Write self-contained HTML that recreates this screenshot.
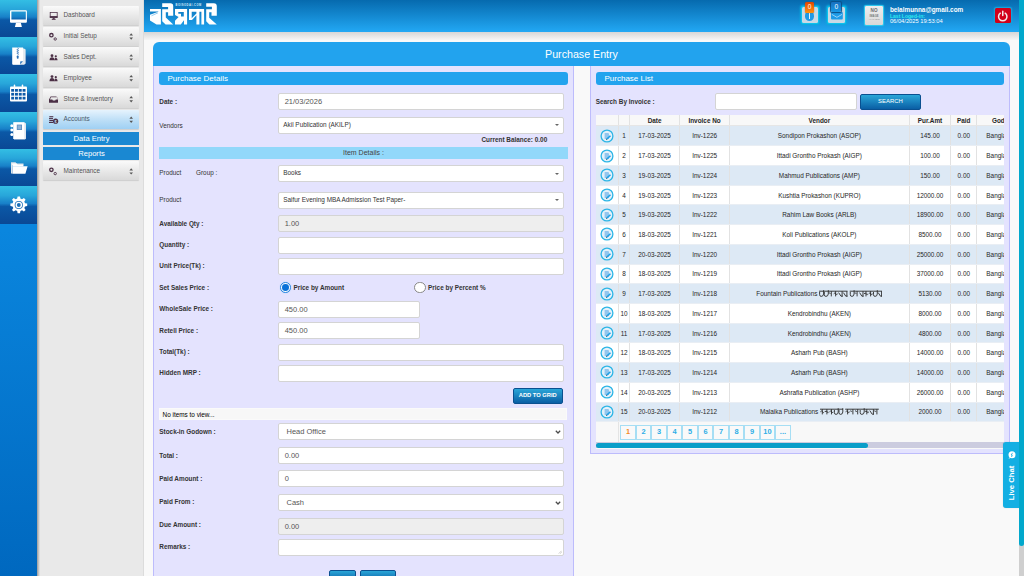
<!DOCTYPE html>
<html><head><meta charset="utf-8">
<style>
*{box-sizing:border-box;margin:0;padding:0}
html,body{width:1024px;height:576px;overflow:hidden}
body{position:relative;background:#f9f9f9;font-family:"Liberation Sans",sans-serif;color:#333}
.a{position:absolute}
.tile{position:absolute;left:0;width:37px;height:37.5px;background:linear-gradient(#33bee4 0%,#28a6da 25%,#1880c8 46%,#0b58a6 54%,#0a4895 100%)}
.mi{position:absolute;left:42.5px;width:96px;height:19px;background:linear-gradient(#fafafa,#e6e6e6 60%,#d9d9d9);border-radius:1px;box-shadow:0 1px 1px rgba(0,0,0,.12);font-size:6.4px;color:#555}
.mi span{position:absolute;left:21px;top:5.5px}
.mi .ud{position:absolute;left:86.5px;top:6px;width:4px;height:8px}
.lbl{position:absolute;left:159.3px;font-size:6.4px;font-weight:bold;color:#333;line-height:8px}
.lbn{font-weight:normal}
.inp{position:absolute;left:278.3px;width:285.5px;height:17px;background:#fff;border:1px solid #d4d4d4;border-radius:2px;font-size:7.47px;color:#555;line-height:15px;padding-left:5.4px}
.sel{font-size:6.4px;color:#333;padding-left:4px;line-height:14.2px}
.dis{background:#eee}
.caret{position:absolute;right:3.6px;top:6.5px;width:0;height:0;border-left:2px solid transparent;border-right:2px solid transparent;border-top:2.5px solid #666}
.chev{position:absolute;right:5px;top:5px;width:4px;height:4px;border-right:1.2px solid #333;border-bottom:1.2px solid #333;transform:rotate(45deg)}
table{border-collapse:collapse;table-layout:fixed}
td,th{font-size:6.4px;text-align:center;color:#262626;border-right:1px solid #e2e2e2;white-space:nowrap;overflow:hidden;padding:0}
th{font-weight:bold;height:11.3px;background:#f8f8f8;border-bottom:1px solid #e6e6e6}
tr.o td{background:#dde9f5}
tr.e td{background:#fff}
td{height:19.73px;border-bottom:1px solid #e9eef4}
.ic{display:inline-block;width:11px;height:11px;border-radius:50%;border:1.3px solid #26b4e4;background:#e8f4fb;position:relative;vertical-align:middle}
.ic:after{content:"";position:absolute;left:2.3px;top:2px;width:4px;height:5px;background:#8cc4ec;border-radius:.5px}
th:last-child{text-align:left;padding-left:14.8px}
td:last-child{text-align:left;padding-left:9.2px}
.pg{position:absolute;top:425.3px;width:15.5px;height:14.3px;border:1px solid #a6def4;background:#f9f9f9;color:#2eaee6;font-size:7.4px;font-weight:bold;text-align:center;line-height:12.5px}
</style></head><body>

<!-- icon bar -->
<div class="a" style="left:0;top:0;width:37px;height:576px;background:linear-gradient(#0a8ae0 0%,#0a86de 40%,#0068bf 100%);box-shadow:1px 0 0 #2a5d90"></div>
<div class="tile" style="top:0.0px;height:37.4px"></div>
<div class="tile" style="top:37.4px;height:37.0px"></div>
<div class="tile" style="top:74.4px;height:37.5px"></div>
<div class="tile" style="top:111.9px;height:36.8px"></div>
<div class="tile" style="top:148.7px;height:37.7px"></div>
<div class="tile" style="top:186.4px;height:38.0px"></div>

<!-- sidebar -->
<div class="a" style="left:37px;top:0;width:107px;height:576px;background:#e9e9e9;border-right:1px solid #dcdcdc"></div>
<div class="a" style="left:37px;top:0;width:2.5px;height:576px;background:linear-gradient(90deg,rgba(60,60,60,.45),rgba(60,60,60,0))"></div>
<div class="mi" style="top:5.6px"><span>Dashboard</span></div>
<div class="mi" style="top:26.5px"><span>Initial Setup</span></div>
<div class="mi" style="top:47.4px"><span>Sales Dept.</span></div>
<div class="mi" style="top:68.3px"><span>Employee</span></div>
<div class="mi" style="top:89.2px"><span>Store &amp; Inventory</span></div>
<div class="mi" style="top:109.7px;background:linear-gradient(#e6f3fd,#b8dcf6 60%,#9fd0f4)"><span style="color:#4a5a6a">Accounts</span></div>
<div class="a" style="left:42.5px;top:131.6px;width:96px;height:13px;background:#1a88d2;color:#fff;font-size:7.6px;text-align:center;line-height:13px;padding-left:2px">Data Entry</div>
<div class="a" style="left:42.5px;top:147.4px;width:96px;height:12.6px;background:#1a88d2;color:#fff;font-size:7.6px;text-align:center;line-height:14px;padding-left:2px">Reports</div>
<div class="mi" style="top:161.3px"><span>Maintenance</span></div>


<!-- tile icons -->
<svg class="a" style="left:0;top:0" width="37" height="225" viewBox="0 0 37 225">
 <g fill="#fff">
  <!-- monitor -->
  <path d="M11,10.3h14.9a1,1 0 0 1 1,1v10.5a1,1 0 0 1 -1,1h-14.9a1,1 0 0 1 -1,-1v-10.5a1,1 0 0 1 1,-1zM11.4,11.5v8.1h14.4v-8.1z" fill-rule="evenodd"/>
  <path d="M16,22.8h4.8l1.1,4.1h-7z"/>
  <!-- zip doc -->
  <path d="M13.5,48.4h10.5l1.6,1.2v13.8l-1.5,1.3h-11.1z" fill="#e3e9ef"/>
  <path d="M12.2,47.6h10.9v13.6l-3,3.2h-7.9z"/>
  <path d="M17.7,47.8l.9,.9-1.8,.9 1.8,.9-1.8,.9 1.8,.9-1.8,.9 1.8,.9-.9,.6" fill="none" stroke="#2a6db4" stroke-width=".7"/>
  <rect x="16.8" y="55.6" width="1.8" height="3.2" rx=".7" fill="#2a6db4"/>
  <path d="M20.1,64.4l3-3.2h-2.2a.8.8 0 0 0 -.8.8z" fill="#3a7dc0"/>
  <!-- calendar -->
  <path d="M11,86.6h15a1,1 0 0 1 1,1v13a1,1 0 0 1 -1,1h-15a1,1 0 0 1 -1,-1v-13a1,1 0 0 1 1,-1z"/>
  <rect x="13.8" y="84.6" width="1.4" height="3" rx=".6"/>
  <rect x="21.8" y="84.6" width="1.4" height="3" rx=".6"/>
  <g fill="#0d5aa8"><rect x="11.2" y="89.0" width="2.9" height="2.7"/><rect x="15.0" y="89.0" width="2.9" height="2.7"/><rect x="18.8" y="89.0" width="2.9" height="2.7"/><rect x="22.6" y="89.0" width="2.9" height="2.7"/><rect x="11.2" y="92.9" width="2.9" height="2.7"/><rect x="15.0" y="92.9" width="2.9" height="2.7"/><rect x="18.8" y="92.9" width="2.9" height="2.7"/><rect x="22.6" y="92.9" width="2.9" height="2.7"/><rect x="11.2" y="96.8" width="2.9" height="2.7"/><rect x="15.0" y="96.8" width="2.9" height="2.7"/><rect x="18.8" y="96.8" width="2.9" height="2.7"/><rect x="22.6" y="96.8" width="2.9" height="2.7"/></g>
  <!-- notebook -->
  <path d="M14,122.6h10.8l1.2,1v15.2l-1.2.8h-10.8z" fill="#dfe6ee"/>
  <path d="M13.2,122.3h11.1v16.6h-11.1z"/>
  <circle cx="11.8" cy="125.8" r="1.5"/><circle cx="11.8" cy="130.1" r="1.5"/><circle cx="11.8" cy="134.4" r="1.5"/>
  <rect x="16.8" y="124.6" width="5.2" height="5.4" fill="#5a8cc0"/>
  <rect x="17.6" y="125.4" width="3.6" height="3.8" fill="#8db3d8"/>
  <!-- folder -->
  <path d="M11,162.2h4.5l1.2,1.4h6.8v1.6h-11.5v8.4h-1z" fill="#dde4ea"/>
  <path d="M12.3,163.4h4.3l1.2,1.3h5.6v1.8h-11z"/>
  <path d="M12.3,166.2h15.3l-2.2,7.6h-13.1z"/>
  <!-- gear -->
  <path d="M17.6,196.4h2.4l.4,2.2 1.6.7 1.9-1.3 1.7,1.7-1.3,1.9.7,1.6 2.2.4v2.4l-2.2.4-.7,1.6 1.3,1.9-1.7,1.7-1.9-1.3-1.6.7-.4,2.2h-2.4l-.4-2.2-1.6-.7-1.9,1.3-1.7-1.7 1.3-1.9-.7-1.6-2.2-.4v-2.4l2.2-.4.7-1.6-1.3-1.9 1.7-1.7 1.9,1.3 1.6-.7z"/>
  <circle cx="18.8" cy="205" r="4.1" fill="#1a6fb8"/>
  <circle cx="18.8" cy="205" r="3.3" fill="#fff"/>
  <circle cx="18.8" cy="205" r="1.9" fill="#1a6fb8"/>
 </g>
</svg>

<!-- menu icons -->
<svg class="a" style="left:44px;top:0" width="96" height="182" viewBox="44 0 96 182">
 <g fill="#4b2f45">
  <path d="M49.8,11.9h7.8v5.6h-7.8z M50.6,12.7v3.6h6.2v-3.6z" fill-rule="evenodd"/>
  <rect x="49.8" y="16.3" width="7.8" height="1.6"/>
  <rect x="52.7" y="17.9" width="2" height="1"/>
  <rect x="51.8" y="18.8" width="3.8" height="1"/>
  <!-- gears initial -->
  <circle cx="51.4" cy="35.2" r="1.7" fill="none" stroke="#4b2f45" stroke-width="1.3"/>
  <circle cx="55.2" cy="39" r="1.2" fill="none" stroke="#4b2f45" stroke-width=".9"/>
  <!-- users sales -->
  <circle cx="52" cy="55.7" r="1.4"/><path d="M49.5,60.3c0-2.2 1-3.1 2.5-3.1s2.5.9 2.5,3.1z"/>
  <circle cx="55.8" cy="56.3" r="1.1"/><path d="M54.3,60.3c.1-1.8.6-2.6 1.5-2.6s1.7.8 1.8,2.6z"/>
  <!-- users employee -->
  <circle cx="52" cy="76.6" r="1.4"/><path d="M49.5,81.2c0-2.2 1-3.1 2.5-3.1s2.5.9 2.5,3.1z"/>
  <circle cx="55.8" cy="77.2" r="1.1"/><path d="M54.3,81.2c.1-1.8.6-2.6 1.5-2.6s1.7.8 1.8,2.6z"/>
  <!-- inbox -->
  <path d="M50.6,96.6h5.8l1.6,3v3.2h-9v-3.2z M51,97.3l-1.1,2.3h2.4l.6,1h2.3l.6-1h2.4l-1.1-2.3z" fill-rule="evenodd"/>
  <!-- coins -->
  <rect x="49.3" y="116.2" width="4" height="1.1"/><rect x="49" y="118.1" width="4" height="1.1"/><rect x="49.3" y="120" width="4" height="1.1"/><rect x="49" y="121.9" width="4" height="1.1"/>
  <circle cx="55.6" cy="121.2" r="2.6"/>
  <text x="55.6" y="122.8" font-size="4" fill="#b9ddf6" text-anchor="middle" font-family="Liberation Sans" font-weight="bold">$</text>
  <!-- gears maintenance -->
  <circle cx="51.4" cy="169.8" r="1.7" fill="none" stroke="#4b2f45" stroke-width="1.3"/>
  <circle cx="55.2" cy="173.6" r="1.2" fill="none" stroke="#4b2f45" stroke-width=".9"/>
 </g>
 <g fill="#555" transform="translate(0,.9)">
  <path d="M129.4,34.6l1.8-2.2 1.8,2.2z M129.4,36.6l1.8,2.2 1.8-2.2z"/>
  <path d="M129.4,55.5l1.8-2.2 1.8,2.2z M129.4,57.5l1.8,2.2 1.8-2.2z"/>
  <path d="M129.4,76.4l1.8-2.2 1.8,2.2z M129.4,78.4l1.8,2.2 1.8-2.2z"/>
  <path d="M129.4,97.3l1.8-2.2 1.8,2.2z M129.4,99.3l1.8,2.2 1.8-2.2z"/>
  <path d="M129.4,117.9l1.8-2.2 1.8,2.2z M129.4,119.9l1.8,2.2 1.8-2.2z"/>
  <path d="M129.4,169.5l1.8-2.2 1.8,2.2z M129.4,171.5l1.8,2.2 1.8-2.2z"/>
 </g>
</svg>

<!-- header -->
<div class="a" style="left:144px;top:0;width:875px;height:31.7px;background:linear-gradient(#066aae,#22a8f4)"></div>
<div class="a" style="left:144px;top:31.7px;width:875px;height:8px;background:linear-gradient(#d6d6d6,#f5f5f5)"></div>


<!-- logo -->
<svg class="a" style="left:144px;top:0" width="80" height="32" viewBox="144 0 80 32">
 <g fill="#fff">
  <path d="M150,9.1h10.9v15.4h-4.4l-6.5-4.1v-5.6l8.4-3.1v-0.2h-8.4z"/>
  <path d="M162.2,3.3h8.2q2.8,0 2.8,2.8v9.6h-5.1v-3.4h-2.3v5.2l7.4,7h-7.6l-3.4-3.2v-12h5.9v-2.4h-5.9z"/>
  <path d="M175,9.1H187.1V24.5H184V20.2L180.8,24.5H175V20.8L178.6,16.9L175,14.9Z M178.3,12.1H183.8V16.6H181V13.7H178.3Z" fill-rule="evenodd"/>
  <path d="M189,9.1h15.1v15.4h-2.7v-12.7h-2v12.7h-3v-9.2l-4.4,4.6h-3z M191.7,11.8v6.4l4.7-4.6v-1.8z" fill-rule="evenodd"/>
  <path d="M206.2,3.3h7.6q3,0 3,3v9.4h-5.3v-3.4h-2.3v5.4l7.6,6.8h-7.4l-3.2-3.2v-12.1h5.7v-2.4h-5.7z"/>
 </g>
 <text x="175.5" y="6" font-size="2.6" fill="#dff2ff" font-family="Liberation Sans" font-weight="bold" letter-spacing=".55">BOISODAI.COM</text>
 <path d="M151.5,15.8l6.5-3" stroke="#7cc3ee" stroke-width=".8"/>
</svg>

<!-- notification icons -->
<div class="a" style="left:801.6px;top:7px;width:16.4px;height:16.4px;background:#c9d9e5;border-radius:1.5px;box-shadow:0 0 0 1px #0cc2ee,0 0 2px 1.2px #08aee0"></div>
<div class="a" style="left:804.8px;top:11.2px;width:9.6px;height:9.6px;border-radius:50%;background:#1e9be8"></div>
<div class="a" style="left:809px;top:13px;width:1.2px;height:3.6px;background:#e8f4fb"></div><div class="a" style="left:809px;top:17.4px;width:1.2px;height:1.2px;background:#e8f4fb"></div>
<div class="a" style="left:804.8px;top:2.3px;width:9.4px;height:10.3px;border-radius:1.5px;background:linear-gradient(#e04400,#ff9410);box-shadow:0 0 1px #7a3000;color:#fff;font-size:6.6px;text-align:center;line-height:10.3px">0</div>
<div class="a" style="left:828.2px;top:7px;width:16.4px;height:16.4px;background:#c9d9e5;border-radius:1.5px;box-shadow:0 0 0 1px #0cc2ee,0 0 2px 1.2px #08aee0"></div>
<svg class="a" style="left:830.5px;top:12px" width="12" height="8" viewBox="0 0 12 8"><rect x="0" y="0" width="11.8" height="7.6" rx="1" fill="#1e9be8"/><path d="M.8,2.4l5.1,2.9 5.1-2.9" fill="none" stroke="#d0eafa" stroke-width=".7"/></svg>
<div class="a" style="left:831.4px;top:2px;width:9.7px;height:10px;border-radius:1.5px;background:linear-gradient(#1870c0,#1a9ae6);box-shadow:0 0 1px 0.5px #0b4f88;color:#fff;font-size:6.6px;text-align:center;line-height:10px">0</div>

<!-- avatar -->
<div class="a" style="left:865.3px;top:6.4px;width:17.6px;height:18.2px;background:linear-gradient(#eeeeee,#d8d8d8);border-radius:1px;box-shadow:0 0 0 1px #2ec8ee,0 0 2px 1px #17b6e6"></div>
<div class="a" style="left:865.3px;top:9.4px;width:17.6px;text-align:center;font-size:4.6px;color:#6a6a6a;font-weight:bold;line-height:4.6px;letter-spacing:.2px">NO</div>
<div class="a" style="left:865.3px;top:14.6px;width:17.6px;text-align:center;font-size:2.7px;color:#777;font-weight:bold;line-height:3px;letter-spacing:.1px">IMAGE</div>
<div class="a" style="left:865.3px;top:18px;width:17.6px;text-align:center;font-size:2.1px;color:#888;line-height:2.6px">AVAILABLE</div>

<!-- user text -->
<div class="a" style="left:889.9px;top:5.5px;font-size:6.4px;font-weight:bold;color:#fff;line-height:7px">belalmunna@gmail.com</div>
<div class="a" style="left:889.9px;top:12.6px;font-size:5.1px;font-weight:bold;color:#2ee8ee;line-height:6px">Last Loged-in:</div>
<div class="a" style="left:889.9px;top:18.4px;font-size:5.75px;color:#fff;line-height:6px">06/04/2025 19:53:04</div>

<!-- power -->
<div class="a" style="left:995px;top:7.8px;width:15.5px;height:15.6px;background:#d2001a;border-radius:1.5px;box-shadow:0 0 0 1px #1aa0d8,0 0 2px 1px #12a6dc"></div>
<svg class="a" style="left:995px;top:7.8px" width="15.5" height="15.6" viewBox="0 0 15.5 15.6"><path d="M5.3,5.2a4.2,4.2 0 1 0 4.9,0" fill="none" stroke="#f4e8ea" stroke-width="1.5" stroke-linecap="round"/><path d="M7.75,3.3v4.2" stroke="#f4e8ea" stroke-width="1.5" stroke-linecap="round"/></svg>

<!-- main panel -->
<div class="a" style="left:153px;top:41.5px;width:857px;height:24.5px;background:#22a3ee;border-radius:6px 6px 0 0"></div>
<div class="a" style="left:153px;top:46px;width:857px;text-align:center;color:#fff;font-size:10.67px;line-height:16px;">Purchase Entry</div>

<!-- left panel body -->
<div class="a" style="left:153px;top:66px;width:421px;height:520px;background:#e4e3fe;border:1px solid #bdbcfc;border-top:none"></div>
<!-- right panel body -->
<div class="a" style="left:590px;top:66px;width:420px;height:388px;background:#e4e3fe;border:1px solid #bdbcfc;border-top:none"></div>

<div class="a" style="left:159px;top:72.2px;width:409px;height:13px;background:#22a3ee;border-radius:3px;color:#fff;font-size:8px;line-height:13px;padding-left:8.5px">Purchase Details</div>
<div class="a" style="left:596px;top:72.2px;width:408px;height:13px;background:#22a3ee;border-radius:3px;color:#fff;font-size:8px;line-height:13px;padding-left:8.5px">Purchase List</div>

<!-- left form -->
<div class="lbl" style="top:97.7px">Date :</div>
<div class="inp" style="top:93.3px">21/03/2026</div>
<div class="lbl lbn" style="top:121.8px">Vendors</div>
<div class="inp sel" style="top:116.6px;line-height:13.5px">Akil Publication (AKILP)<i class="caret"></i></div>
<div class="a" style="left:481.5px;top:136px;font-size:6.4px;font-weight:bold;color:#333;line-height:8px">Current Balance: 0.00</div>
<div class="a" style="left:159px;top:146.8px;width:409px;height:12.5px;background:#92d8fa;font-size:7px;color:#444;text-align:center;line-height:12.2px">Item Details :</div>

<div class="lbl lbn" style="top:169.4px">Product</div>
<div class="lbl lbn" style="top:169.4px;left:196px">Group :</div>
<div class="inp sel" style="top:165.3px">Books<i class="caret"></i></div>
<div class="lbl lbn" style="top:196px">Product</div>
<div class="inp sel" style="top:191.5px">Saifur Evening MBA Admission Test Paper-<i class="caret"></i></div>
<div class="lbl" style="top:219.7px">Available Qty :</div>
<div class="inp dis" style="top:215.4px">1.00</div>
<div class="lbl" style="top:241.4px">Quantity :</div>
<div class="inp" style="top:236.6px"></div>
<div class="lbl" style="top:262.1px">Unit Price(Tk) :</div>
<div class="inp" style="top:257.9px"></div>
<div class="lbl" style="top:283.5px">Set Sales Price :</div>
<div class="a" style="left:280px;top:282px;width:11.4px;height:11.4px;border-radius:50%;border:1px solid #2a86e0;background:#fff;box-shadow:0 0 1px #8ac4f4"><div class="a" style="left:1.3px;top:1.3px;width:6.8px;height:6.8px;border-radius:50%;background:#0a72d8"></div></div>
<div class="a" style="left:293.5px;top:283.5px;font-size:6.4px;font-weight:bold;color:#333;line-height:8px">Price by Amount</div>
<div class="a" style="left:414.3px;top:282px;width:11.4px;height:11.4px;border-radius:50%;border:1px solid #888;background:#fff"></div>
<div class="a" style="left:428.1px;top:283.5px;font-size:6.4px;font-weight:bold;color:#333;line-height:8px">Price by Percent %</div>
<div class="lbl" style="top:304.9px">WholeSale Price :</div>
<div class="inp" style="top:300.6px;width:142px">450.00</div>
<div class="lbl" style="top:326.6px">Retell Price :</div>
<div class="inp" style="top:322.2px;width:142px">450.00</div>
<div class="lbl" style="top:347.7px">Total(Tk) :</div>
<div class="inp" style="top:343.6px"></div>
<div class="lbl" style="top:369px">Hidden MRP :</div>
<div class="inp" style="top:365px"></div>
<div class="a" style="left:512.5px;top:388px;width:50.5px;height:15.8px;border-radius:2px;background:linear-gradient(#2aa6d8,#0a5ea4);border:1px solid #0a5090;color:#fff;font-size:5.75px;font-weight:bold;text-align:center;line-height:13.8px">ADD TO GRID</div>
<div class="a" style="left:159.2px;top:407.6px;width:408px;height:12.2px;background:#f7f7f7;border:.5px solid #fafafa;font-size:6.4px;color:#000;line-height:11.5px;padding-left:2.4px">No items to view...</div>

<div class="lbl" style="top:427.5px">Stock-in Godown :</div>
<div class="inp" style="top:423.3px;padding-left:7.2px">Head Office<svg class="a" style="right:2.2px;top:6.2px" width="6" height="4" viewBox="0 0 6 4"><path d="M.8,.8l2.2,2.2 2.2-2.2" fill="none" stroke="#4a4a4a" stroke-width="1.25"/></svg></div>
<div class="lbl" style="top:451.6px">Total :</div>
<div class="inp" style="top:446.7px">0.00</div>
<div class="lbl" style="top:474.8px">Paid Amount :</div>
<div class="inp" style="top:470.2px">0</div>
<div class="lbl" style="top:498.3px">Paid From :</div>
<div class="inp" style="top:493.7px;padding-left:7.2px">Cash<svg class="a" style="right:2.2px;top:6.2px" width="6" height="4" viewBox="0 0 6 4"><path d="M.8,.8l2.2,2.2 2.2-2.2" fill="none" stroke="#4a4a4a" stroke-width="1.25"/></svg></div>
<div class="lbl" style="top:521.2px">Due Amount :</div>
<div class="inp dis" style="top:517.5px">0.00</div>
<div class="lbl" style="top:542.6px">Remarks :</div>
<div class="inp" style="top:538.9px"><svg class="a" style="right:1px;bottom:1px" width="4" height="4" viewBox="0 0 4 4"><path d="M3.6,.8l-2.8,2.8M3.6,2.4l-1.2,1.2" stroke="#999" stroke-width=".5"/></svg></div>
<div class="a" style="left:328.6px;top:570.2px;width:27px;height:12px;border-radius:2px;background:linear-gradient(#2aa6d8,#0a5ea4);border:1px solid #0a5090"></div>
<div class="a" style="left:360px;top:570.2px;width:36px;height:12px;border-radius:2px;background:linear-gradient(#2aa6d8,#0a5ea4);border:1px solid #0a5090"></div>

<!-- right list -->
<div class="a" style="left:595.7px;top:97.7px;font-size:6.4px;font-weight:bold;color:#333;line-height:8px">Search By Invoice :</div>
<div class="a" style="left:714.7px;top:93.4px;width:142px;height:17px;background:#fff;border:1px solid #d4d4d4;border-radius:2px"></div>
<div class="a" style="left:859.9px;top:93.9px;width:61px;height:15.8px;border-radius:2px;background:linear-gradient(#2aa6d8,#0a5ea4);border:1px solid #0a5090;color:#fff;font-size:5.9px;text-align:center;line-height:13.8px">SEARCH</div>

<div class="a" style="left:595.7px;top:114.7px;width:408.6px;height:334px;overflow:hidden;background:#f8f8f8">
<table style="width:430px">
<colgroup><col style="width:22.7px"><col style="width:11.2px"><col style="width:50px"><col style="width:50.1px"><col style="width:179.4px"><col style="width:41.9px"><col style="width:25.7px"><col style="width:49px"></colgroup>
<tr><th></th><th></th><th>Date</th><th>Invoice No</th><th>Vendor</th><th>Pur.Amt</th><th>Paid</th><th>Godown</th></tr>
<tr class="o"><td><svg width="14" height="14" viewBox="0 0 14 14" style="vertical-align:middle"><circle cx="7" cy="7" r="5.9" fill="#e4f1fa" stroke="#2cb5e6" stroke-width="1.3"/><path d="M4.6,3.9h3.6l.8.8v5.4h-4.4z" fill="#92c6ee"/><path d="M6.3,9.6l3.6-3.4 1.1,1.1-3.6,3.3-1.4.3z" fill="#1e9fe6"/><path d="M6.1,10.8l.3-1.1.9.9z" fill="#5a4a2a"/></svg></td><td>1</td><td>17-03-2025</td><td>Inv-1226</td><td>Sondipon Prokashon (ASOP)</td><td>145.00</td><td>0.00</td><td>Bangla</td></tr>
<tr class="e"><td><svg width="14" height="14" viewBox="0 0 14 14" style="vertical-align:middle"><circle cx="7" cy="7" r="5.9" fill="#e4f1fa" stroke="#2cb5e6" stroke-width="1.3"/><path d="M4.6,3.9h3.6l.8.8v5.4h-4.4z" fill="#92c6ee"/><path d="M6.3,9.6l3.6-3.4 1.1,1.1-3.6,3.3-1.4.3z" fill="#1e9fe6"/><path d="M6.1,10.8l.3-1.1.9.9z" fill="#5a4a2a"/></svg></td><td>2</td><td>17-03-2025</td><td>Inv-1225</td><td>Ittadi Grontho Prokash (AIGP)</td><td>100.00</td><td>0.00</td><td>Bangla</td></tr>
<tr class="o"><td><svg width="14" height="14" viewBox="0 0 14 14" style="vertical-align:middle"><circle cx="7" cy="7" r="5.9" fill="#e4f1fa" stroke="#2cb5e6" stroke-width="1.3"/><path d="M4.6,3.9h3.6l.8.8v5.4h-4.4z" fill="#92c6ee"/><path d="M6.3,9.6l3.6-3.4 1.1,1.1-3.6,3.3-1.4.3z" fill="#1e9fe6"/><path d="M6.1,10.8l.3-1.1.9.9z" fill="#5a4a2a"/></svg></td><td>3</td><td>19-03-2025</td><td>Inv-1224</td><td>Mahmud Publications (AMP)</td><td>150.00</td><td>0.00</td><td>Bangla</td></tr>
<tr class="e"><td><svg width="14" height="14" viewBox="0 0 14 14" style="vertical-align:middle"><circle cx="7" cy="7" r="5.9" fill="#e4f1fa" stroke="#2cb5e6" stroke-width="1.3"/><path d="M4.6,3.9h3.6l.8.8v5.4h-4.4z" fill="#92c6ee"/><path d="M6.3,9.6l3.6-3.4 1.1,1.1-3.6,3.3-1.4.3z" fill="#1e9fe6"/><path d="M6.1,10.8l.3-1.1.9.9z" fill="#5a4a2a"/></svg></td><td>4</td><td>19-03-2025</td><td>Inv-1223</td><td>Kushtia Prokashon (KUPRO)</td><td>12000.00</td><td>0.00</td><td>Bangla</td></tr>
<tr class="o"><td><svg width="14" height="14" viewBox="0 0 14 14" style="vertical-align:middle"><circle cx="7" cy="7" r="5.9" fill="#e4f1fa" stroke="#2cb5e6" stroke-width="1.3"/><path d="M4.6,3.9h3.6l.8.8v5.4h-4.4z" fill="#92c6ee"/><path d="M6.3,9.6l3.6-3.4 1.1,1.1-3.6,3.3-1.4.3z" fill="#1e9fe6"/><path d="M6.1,10.8l.3-1.1.9.9z" fill="#5a4a2a"/></svg></td><td>5</td><td>19-03-2025</td><td>Inv-1222</td><td>Rahim Law Books (ARLB)</td><td>18900.00</td><td>0.00</td><td>Bangla</td></tr>
<tr class="e"><td><svg width="14" height="14" viewBox="0 0 14 14" style="vertical-align:middle"><circle cx="7" cy="7" r="5.9" fill="#e4f1fa" stroke="#2cb5e6" stroke-width="1.3"/><path d="M4.6,3.9h3.6l.8.8v5.4h-4.4z" fill="#92c6ee"/><path d="M6.3,9.6l3.6-3.4 1.1,1.1-3.6,3.3-1.4.3z" fill="#1e9fe6"/><path d="M6.1,10.8l.3-1.1.9.9z" fill="#5a4a2a"/></svg></td><td>6</td><td>18-03-2025</td><td>Inv-1221</td><td>Koli Publications (AKOLP)</td><td>8500.00</td><td>0.00</td><td>Bangla</td></tr>
<tr class="o"><td><svg width="14" height="14" viewBox="0 0 14 14" style="vertical-align:middle"><circle cx="7" cy="7" r="5.9" fill="#e4f1fa" stroke="#2cb5e6" stroke-width="1.3"/><path d="M4.6,3.9h3.6l.8.8v5.4h-4.4z" fill="#92c6ee"/><path d="M6.3,9.6l3.6-3.4 1.1,1.1-3.6,3.3-1.4.3z" fill="#1e9fe6"/><path d="M6.1,10.8l.3-1.1.9.9z" fill="#5a4a2a"/></svg></td><td>7</td><td>20-03-2025</td><td>Inv-1220</td><td>Ittadi Grontho Prokash (AIGP)</td><td>25000.00</td><td>0.00</td><td>Bangla</td></tr>
<tr class="e"><td><svg width="14" height="14" viewBox="0 0 14 14" style="vertical-align:middle"><circle cx="7" cy="7" r="5.9" fill="#e4f1fa" stroke="#2cb5e6" stroke-width="1.3"/><path d="M4.6,3.9h3.6l.8.8v5.4h-4.4z" fill="#92c6ee"/><path d="M6.3,9.6l3.6-3.4 1.1,1.1-3.6,3.3-1.4.3z" fill="#1e9fe6"/><path d="M6.1,10.8l.3-1.1.9.9z" fill="#5a4a2a"/></svg></td><td>8</td><td>18-03-2025</td><td>Inv-1219</td><td>Ittadi Grontho Prokash (AIGP)</td><td>37000.00</td><td>0.00</td><td>Bangla</td></tr>
<tr class="o"><td><svg width="14" height="14" viewBox="0 0 14 14" style="vertical-align:middle"><circle cx="7" cy="7" r="5.9" fill="#e4f1fa" stroke="#2cb5e6" stroke-width="1.3"/><path d="M4.6,3.9h3.6l.8.8v5.4h-4.4z" fill="#92c6ee"/><path d="M6.3,9.6l3.6-3.4 1.1,1.1-3.6,3.3-1.4.3z" fill="#1e9fe6"/><path d="M6.1,10.8l.3-1.1.9.9z" fill="#5a4a2a"/></svg></td><td>9</td><td>17-03-2025</td><td>Inv-1218</td><td>Fountain Publications <svg width="63.2" height="7" viewBox="0 0 63.2 7" style="vertical-align:-1px"><path d="M0.0,1.2h28.5 M0.6,2v2.6q0,1.8 1.6,1.8q2.1,0 2.4,-2.4v-3.8 M5.3,2v2.6q0,1.8 1.6,1.8q2.1,0 2.4,-2.4v-3.8 M12.3,1.2v5.2 M9.8,3q1,-.6 1.6,.8 M16.6,1.2v5.2 M14.7,3.8q1.2,-1.6 2.1,0q1.2,1.6 1.9,0 M23.1,1.2v5.2 M19.6,2.6l2.4,3.6h1.8 M27.9,1.2v5.2 M24.4,2.6l2.4,3.6h1.8 M30.7,1.2h32.5 M31.3,2v2.6q0,1.8 1.6,1.8q2.0,0 2.2,-2.4v-3.8 M38.1,1.2v5.2 M35.6,3q1,-.6 1.6,.8 M44.0,1.2v5.2 M40.6,2.6l2.3,3.6h1.7 M47.0,1.2v5.2 M45.0,3.8q1.2,-1.6 2.1,0q1.2,1.6 1.9,0 M51.6,1.2v5.2 M49.7,3.8q1.2,-1.6 2.1,0q1.2,1.6 1.9,0 M54.5,2v2.6q0,1.8 1.6,1.8q2.0,0 2.2,-2.4v-3.8 M62.6,1.2v5.2 M59.2,2.6l2.3,3.6h1.7" fill="none" stroke="#2a2a2a" stroke-width=".9"/></svg></td><td>5130.00</td><td>0.00</td><td>Bangla</td></tr>
<tr class="e"><td><svg width="14" height="14" viewBox="0 0 14 14" style="vertical-align:middle"><circle cx="7" cy="7" r="5.9" fill="#e4f1fa" stroke="#2cb5e6" stroke-width="1.3"/><path d="M4.6,3.9h3.6l.8.8v5.4h-4.4z" fill="#92c6ee"/><path d="M6.3,9.6l3.6-3.4 1.1,1.1-3.6,3.3-1.4.3z" fill="#1e9fe6"/><path d="M6.1,10.8l.3-1.1.9.9z" fill="#5a4a2a"/></svg></td><td>10</td><td>18-03-2025</td><td>Inv-1217</td><td>Kendrobindhu (AKEN)</td><td>8000.00</td><td>0.00</td><td>Bangla</td></tr>
<tr class="o"><td><svg width="14" height="14" viewBox="0 0 14 14" style="vertical-align:middle"><circle cx="7" cy="7" r="5.9" fill="#e4f1fa" stroke="#2cb5e6" stroke-width="1.3"/><path d="M4.6,3.9h3.6l.8.8v5.4h-4.4z" fill="#92c6ee"/><path d="M6.3,9.6l3.6-3.4 1.1,1.1-3.6,3.3-1.4.3z" fill="#1e9fe6"/><path d="M6.1,10.8l.3-1.1.9.9z" fill="#5a4a2a"/></svg></td><td>11</td><td>17-03-2025</td><td>Inv-1216</td><td>Kendrobindhu (AKEN)</td><td>4800.00</td><td>0.00</td><td>Bangla</td></tr>
<tr class="e"><td><svg width="14" height="14" viewBox="0 0 14 14" style="vertical-align:middle"><circle cx="7" cy="7" r="5.9" fill="#e4f1fa" stroke="#2cb5e6" stroke-width="1.3"/><path d="M4.6,3.9h3.6l.8.8v5.4h-4.4z" fill="#92c6ee"/><path d="M6.3,9.6l3.6-3.4 1.1,1.1-3.6,3.3-1.4.3z" fill="#1e9fe6"/><path d="M6.1,10.8l.3-1.1.9.9z" fill="#5a4a2a"/></svg></td><td>12</td><td>18-03-2025</td><td>Inv-1215</td><td>Asharh Pub (BASH)</td><td>14000.00</td><td>0.00</td><td>Bangla</td></tr>
<tr class="o"><td><svg width="14" height="14" viewBox="0 0 14 14" style="vertical-align:middle"><circle cx="7" cy="7" r="5.9" fill="#e4f1fa" stroke="#2cb5e6" stroke-width="1.3"/><path d="M4.6,3.9h3.6l.8.8v5.4h-4.4z" fill="#92c6ee"/><path d="M6.3,9.6l3.6-3.4 1.1,1.1-3.6,3.3-1.4.3z" fill="#1e9fe6"/><path d="M6.1,10.8l.3-1.1.9.9z" fill="#5a4a2a"/></svg></td><td>13</td><td>17-03-2025</td><td>Inv-1214</td><td>Asharh Pub (BASH)</td><td>14000.00</td><td>0.00</td><td>Bangla</td></tr>
<tr class="e"><td><svg width="14" height="14" viewBox="0 0 14 14" style="vertical-align:middle"><circle cx="7" cy="7" r="5.9" fill="#e4f1fa" stroke="#2cb5e6" stroke-width="1.3"/><path d="M4.6,3.9h3.6l.8.8v5.4h-4.4z" fill="#92c6ee"/><path d="M6.3,9.6l3.6-3.4 1.1,1.1-3.6,3.3-1.4.3z" fill="#1e9fe6"/><path d="M6.1,10.8l.3-1.1.9.9z" fill="#5a4a2a"/></svg></td><td>14</td><td>20-03-2025</td><td>Inv-1213</td><td>Ashrafia Publication (ASHP)</td><td>26000.00</td><td>0.00</td><td>Bangla</td></tr>
<tr class="o"><td><svg width="14" height="14" viewBox="0 0 14 14" style="vertical-align:middle"><circle cx="7" cy="7" r="5.9" fill="#e4f1fa" stroke="#2cb5e6" stroke-width="1.3"/><path d="M4.6,3.9h3.6l.8.8v5.4h-4.4z" fill="#92c6ee"/><path d="M6.3,9.6l3.6-3.4 1.1,1.1-3.6,3.3-1.4.3z" fill="#1e9fe6"/><path d="M6.1,10.8l.3-1.1.9.9z" fill="#5a4a2a"/></svg></td><td>15</td><td>20-03-2025</td><td>Inv-1212</td><td>Malaika Publications <svg width="58.8" height="7" viewBox="0 0 58.8 7" style="vertical-align:-1px"><path d="M0.0,1.2h23.0 M2.3,1.2v5.2 M0.4,3.8q1.1,-1.6 2.1,0q1.1,1.6 1.8,0 M6.9,1.2v5.2 M5.0,3.8q1.1,-1.6 2.1,0q1.1,1.6 1.8,0 M11.5,1.2v5.2 M9.6,3.8q1.1,-1.6 2.1,0q1.1,1.6 1.8,0 M14.4,2v2.6q0,1.8 1.6,1.8q2.0,0 2.2,-2.4v-3.8 M19.0,2v2.6q0,1.8 1.6,1.8q2.0,0 2.2,-2.4v-3.8 M25.2,1.2h33.6 M27.6,1.2v5.2 M25.6,3.8q1.2,-1.6 2.2,0q1.2,1.6 1.9,0 M32.9,1.2v5.2 M30.3,3q1,-.6 1.6,.8 M37.7,1.2v5.2 M35.1,3q1,-.6 1.6,.8 M40.2,2v2.6q0,1.8 1.6,1.8q2.2,0 2.4,-2.4v-3.8 M46.8,1.2v5.2 M44.8,3.8q1.2,-1.6 2.2,0q1.2,1.6 1.9,0 M53.4,1.2v5.2 M49.8,2.6l2.4,3.6h1.8 M56.9,1.2v5.2 M54.3,3q1,-.6 1.6,.8" fill="none" stroke="#2a2a2a" stroke-width=".9"/></svg></td><td>2000.00</td><td>0.00</td><td>Bangla</td></tr>
</table>
</div>
<div class="a" style="left:618.4px;top:421.8px;width:1px;height:20px;background:#e4e4e4"></div>
<div class="pg" style="left:620.2px;color:#f58a1f">1</div>
<div class="pg" style="left:635.7px">2</div>
<div class="pg" style="left:651.2px">3</div>
<div class="pg" style="left:666.7px">4</div>
<div class="pg" style="left:682.2px">5</div>
<div class="pg" style="left:697.7px">6</div>
<div class="pg" style="left:713.2px">7</div>
<div class="pg" style="left:728.7px">8</div>
<div class="pg" style="left:744.2px">9</div>
<div class="pg" style="left:759.7px">10</div>
<div class="pg" style="left:775.2px">...</div>
<div class="a" style="left:595.7px;top:442.3px;width:408.6px;height:5.7px;background:#ccccdf"></div>
<div class="a" style="left:596px;top:443px;width:272px;height:4.8px;background:#0a9ec9;border-radius:3px"></div>

<!-- live chat -->
<div class="a" style="left:1002.7px;top:442px;width:16.5px;height:65.6px;background:#13afe3;border-radius:3px 0 0 3px;box-shadow:0 0 1px rgba(0,0,0,.25)"></div>
<svg class="a" style="left:1008.4px;top:451.4px" width="8" height="8" viewBox="0 0 8 8"><circle cx="4" cy="3.8" r="3.5" fill="#fff"/><path d="M1.2,6.4l-.6,1.4 1.8-.8z" fill="#fff"/><path d="M4.6,1.8l-1.5,2.2h1.2l-.8,2" fill="none" stroke="#12ade0" stroke-width=".8"/></svg>
<div class="a" style="left:993.8px;top:478.6px;width:35px;height:8px;transform:rotate(-90deg);color:#fff;font-weight:bold;font-size:7.7px;line-height:8px;text-align:center;white-space:nowrap">Live Chat</div>

<!-- scrollbar -->
<div class="a" style="left:1019px;top:0;width:5px;height:576px;background:#cfcfcf"></div>
<div class="a" style="left:1019px;top:0;width:5px;height:546px;background:#02a8cc;border-radius:0 0 3px 3px"></div>

</body></html>
